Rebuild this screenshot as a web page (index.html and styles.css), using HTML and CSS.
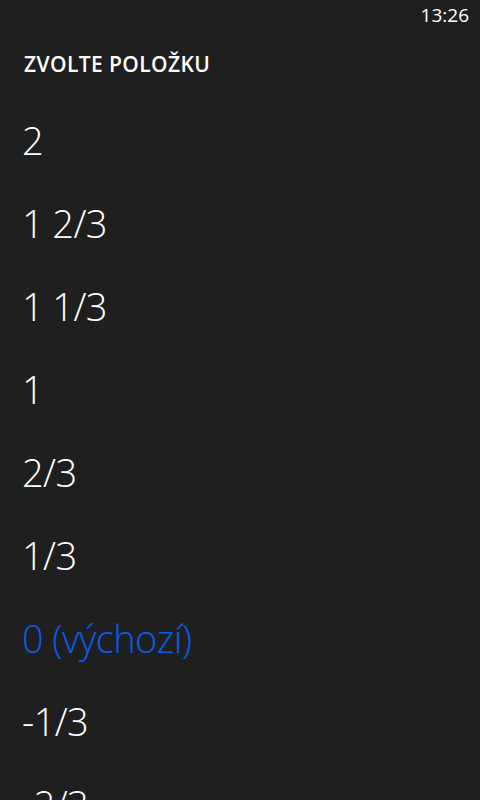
FILE: index.html
```html
<!DOCTYPE html>
<html lang="cs">
<head>
  <meta charset="UTF-8">
  <meta name="viewport" content="width=device-width, initial-scale=1.0">
  <title>Zvolte položku</title>
  <link rel="stylesheet" href="styles.css">
</head>
<body>
  <div class="status-bar">
    <span class="clock">13:26</span>
  </div>
  <header class="picker-header">
    <h1>ZVOLTE POLOŽKU</h1>
  </header>
  <ul class="picker-list">
    <li>2</li>
    <li>1 2/3</li>
    <li>1 1/3</li>
    <li>1</li>
    <li>2/3</li>
    <li>1/3</li>
    <li class="selected">0 (výchozí)</li>
    <li>-1/3</li>
    <li>-2/3</li>
  </ul>
</body>
</html>
```

FILE: styles.css
```css
body {
  margin: 0;
  padding: 0;
  background-color: #1f1f1f;
  color: #ffffff;
  font-family: "Open Sans", "Noto Sans", sans-serif;
  height: 800px;
  overflow: hidden;
}

.status-bar {
  height: 32px;
  display: flex;
  justify-content: flex-end;
  padding-right: 11px;
}

.clock {
  font-size: 19px;
  line-height: 30px;
  font-weight: 400;
}

.picker-header {
  padding: 18px 24px 21px;
}

.picker-header h1 {
  margin: 0;
  font-size: 21px;
  line-height: 28px;
  font-weight: 600;
  letter-spacing: 0.4px;
}

.picker-list {
  list-style: none;
  margin: 0;
  padding: 0 0 0 22px;
}

.picker-list li {
  height: 83px;
  font-size: 38px;
  line-height: 83px;
  font-weight: 300;
  letter-spacing: -0.6px;
}

.picker-list li.selected {
  color: #0a5ae8;
}
```
